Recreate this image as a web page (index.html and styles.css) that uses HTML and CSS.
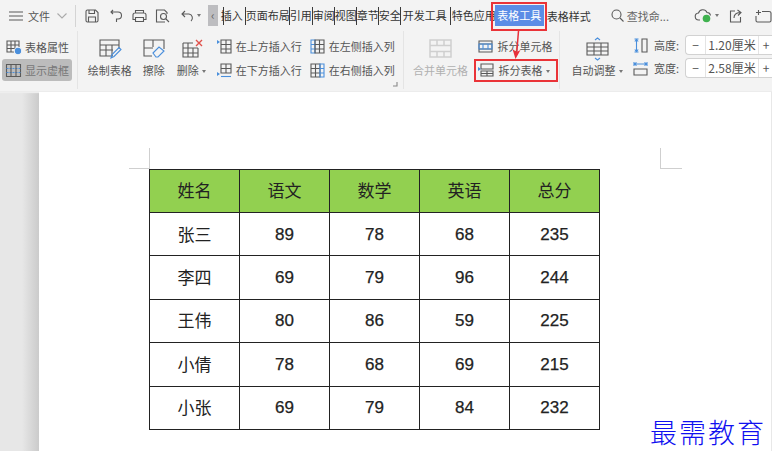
FILE: index.html
```html
<!DOCTYPE html>
<html lang="zh-CN">
<head>
<meta charset="utf-8">
<title>表格工具</title>
<link rel="stylesheet" href="styles.css">
</head>
<body>
<div class="app">
  <header class="topbar">
    <svg class="ic hamburger" width="14" height="12" viewBox="0 0 14 12"><path d="M0 2h14M0 6h14M0 10h14"/></svg>
    <span class="file">文件</span>
    <svg class="ic chev" width="10" height="6" viewBox="0 0 10 6"><path d="M.5.5 5 5 9.500.5"/></svg>
    <i class="tsep"></i>
    <svg class="ic qa qa-save" width="14" height="14" viewBox="0 0 14 14"><path d="M1 2.500Q1 1 2.500 1h8L13 3.500v8Q13 13 11.500 13h-9Q1 13 1 11.500zM4 1v3.500h5.500V1M3.500 13V8h7v5"/></svg>
    <svg class="ic qa qa-redo" width="14" height="14" viewBox="0 0 14 14"><path d="M1 3h7a3.500 3.500 0 0 1 0 7H6.500V13M3 1 1 3l2 2"/></svg>
    <svg class="ic qa qa-print" width="15" height="14" viewBox="0 0 15 14"><path d="M3.500 4V1.500h8V4M3.500 10.500H1V6q0-2 2-2h9q2 0 2 2v4.500h-2.500M3.500 8.500h8v4h-8z"/></svg>
    <svg class="ic qa qa-prev" width="15" height="14" viewBox="0 0 15 14"><path d="M10 13H1.500V1h8L12 3.500V5"/><circle cx="8.500" cy="7.500" r="3"/><path d="m11 10 3 3"/></svg>
    <svg class="ic qa qa-undo" width="13" height="12" viewBox="0 0 13 12"><path d="M4 1 1 4l3 3M1 4h7a4 4 0 0 1 2 7"/></svg>
    <i class="caret caret-undo"></i>
    <span class="scroll-btn">‹</span>
    <nav class="tabs">
      <span class="tab w22 first">插入</span>
      <span class="tab w44">页面布局</span>
      <span class="tab w23">引用</span>
      <span class="tab w22">审阅</span>
      <span class="tab w22">视图</span>
      <span class="tab w22">章节</span>
      <span class="tab w22">安全</span>
      <span class="tab w50 dev">开发工具</span>
      <span class="tab w45 spec">特色应用</span>
      <span class="tab-active">表格工具</span>
      <span class="tab-plain">表格样式</span>
    </nav>
    <svg class="ic search" width="13" height="13" viewBox="0 0 13 13"><circle cx="5.500" cy="5.500" r="4.500"/><path d="m9 9 3.500 3.500"/></svg>
    <span class="find">查找命...</span>
    <svg class="cloud" width="17" height="15" viewBox="0 0 17 15"><path class="stroke" d="M5 12H4a3.500 3.500 0 0 1-.5-7A4.500 4.500 0 0 1 12 4.500a3.500 3.500 0 0 1 3.500 3"/><circle cx="11.500" cy="10.500" r="3.800" fill="#3fb24f"/></svg>
    <i class="caret caret-cloud"></i>
    <svg class="ic share" width="14" height="14" viewBox="0 0 14 14"><path d="M6 2H1.500v11h10V8M5 9q0-5 6-5.500M8.500 1 12 3.500 9 6.500"/></svg>
    <svg class="ic addwin" width="17" height="14" viewBox="0 0 17 14"><path d="M7 2.500h7Q16 2.500 16 4v7.500q0 1.500-1.500 1.500h-12Q1 13 1 11.500V7M3.500 1v5M1 3.500h5"/></svg>
  </header>

  <section class="ribbon">
    <div class="group g-view">
      <div class="row-btn">
        <svg class="ic small" width="16" height="15" viewBox="0 0 16 15"><path d="M1 1h12v11H1zM1 5h12M1 8.500h12M5 1v11M9 1v11"/><circle class="fill-blue" cx="12" cy="11" r="3.700"/></svg>
        <span>表格属性</span>
      </div>
      <div class="row-btn selected">
        <svg class="ic small" width="15" height="13" viewBox="0 0 15 13"><path d="M.5.500h14v12H.5z"/><path class="blue" d="M.5 4.500h14M.5 8.500h14" stroke-dasharray="2 1"/><path d="M5 .5v12M10 .5v12"/></svg>
        <span>显示虚框</span>
      </div>
    </div>

    <div class="group g-draw">
      <div class="big b-draw">
        <svg class="ic" width="22" height="20" viewBox="0 0 22 20"><path d="M14 17H1V1h19v9M1 6h19M1 11h13M7 6v11M13 6v11"/><path class="blue" d="m12 19 1-3.500 7-7 2 2-7 7z"/></svg>
        <span>绘制表格</span>
      </div>
      <div class="big b-erase">
        <svg class="ic" width="22" height="20" viewBox="0 0 22 20"><path d="M9 17H1V1h20v9M1 9h9M10 1v7"/><path class="blue" d="m10 14 6-6 5 4-6 6h-2z"/></svg>
        <span>擦除</span>
      </div>
      <div class="big b-del">
        <svg class="ic" width="22" height="20" viewBox="0 0 22 20"><path d="M1 4h10M16 9v9H1V4M1 9h15M1 14h15M6 4v14M11 9v9"/><path class="red" d="m14 1 6 6m0-6-6 6"/></svg>
        <span class="with-caret">删除<i class="caret"></i></span>
      </div>
      <div class="insert-grid">
        <div class="ins">
          <svg class="ic" width="15" height="15" viewBox="0 0 15 15"><path d="M4 1h10v13H4zM4 5.500h10M4 10h10M9 1v13"/><path class="fill-blue-n" d="M0 1l3 2-3 2z"/></svg>
          <span>在上方插入行</span>
        </div>
        <div class="ins">
          <svg class="ic" width="15" height="15" viewBox="0 0 15 15"><path class="blue" d="M1 1h4v13H1zM1 5.500h4M1 10h4"/><path d="M5 1h9v13H5zM5 5.500h9M5 10h9M9.500 1v13"/></svg>
          <span>在左侧插入列</span>
        </div>
        <div class="ins">
          <svg class="ic" width="15" height="15" viewBox="0 0 15 15"><path d="M4 1h10v9H4zM4 5.500h10M9 1v9"/><path class="fill-blue-n" d="M0 9l3 2-3 2z"/><path class="blue" d="M4 13.500h10"/></svg>
          <span>在下方插入行</span>
        </div>
        <div class="ins">
          <svg class="ic" width="15" height="15" viewBox="0 0 15 15"><path d="M1 1h9v13H1zM1 5.500h9M1 10h9M5.500 1v13"/><path class="blue" d="M10 1h4v13h-4zM10 5.500h4M10 10h4"/></svg>
          <span>在右侧插入列</span>
        </div>
      </div>
      <svg class="launcher" width="5" height="5" viewBox="0 0 5 5"><path d="M4 0v4H0"/></svg>
    </div>

    <div class="group g-merge">
      <div class="big b-merge">
        <svg class="ic dim" width="23" height="19" viewBox="0 0 23 19"><path d="M1 1h21v17H1zM1 6.500h21M1 12.500h21M8 1v5.500M15 1v5.500M8 12.500V18M15 12.500V18"/></svg>
        <span>合并单元格</span>
      </div>
      <div class="split-col">
        <div class="ins split-a">
          <svg class="ic" width="15" height="13" viewBox="0 0 15 13"><path d="M1 1h13v11H1zM1 4h13M1 9h13"/><path class="blue" d="M1 4h13v5H1zM5 4v5M10 4v5"/></svg>
          <span>拆分单元格</span>
        </div>
        <div class="ins split-b">
          <svg class="ic" width="16" height="14" viewBox="0 0 16 14"><path d="M3 1h12v5H3zM3 8h12v5H3zM9 8v5M3 10.500h12"/><path class="fill-blue-n" d="M0 4l3 2-3 2z"/></svg>
          <span class="with-caret">拆分表格<i class="caret"></i></span>
        </div>
      </div>
    </div>

    <div class="group g-size">
      <div class="big b-auto">
        <svg class="ic" width="23" height="24" viewBox="0 0 23 24"><path d="M1 6h21v12H1zM1 10h21M1 14h21M8 6v12M15 6v12"/><path class="blue" d="m9 3 2.500-2L14 3M9 21l2.500 2 2.500-2"/></svg>
        <span class="with-caret">自动调整<i class="caret"></i></span>
      </div>
      <div class="dims">
        <div class="dim-row">
          <svg class="ic" width="15" height="15" viewBox="0 0 15 15"><path class="blue" d="M1.500 1h4M1.500 14h4M3.500 1v13M1.800 3.500l1.700-2 1.700 2M1.800 11.500l1.700 2 1.700-2"/><path d="M9 1h5v13H9z"/></svg>
          <span class="dim-label">高度:</span>
          <div class="stepper"><span class="minus">−</span><span class="val">1.20厘米</span><span class="plus">+</span></div>
        </div>
        <div class="dim-row">
          <svg class="ic" width="15" height="15" viewBox="0 0 15 15"><path class="blue" d="M1 1v4M14 1v4M1 3h13M3.500 1.300l-2 1.700 2 1.700M11.500 1.300l2 1.700-2 1.700"/><path d="M1 8h13v6H1z"/></svg>
          <span class="dim-label">宽度:</span>
          <div class="stepper"><span class="minus">−</span><span class="val">2.58厘米</span><span class="plus">+</span></div>
        </div>
      </div>
    </div>
  </section>

  <main class="doc">
    <div class="gutter"></div>
    <div class="page">
      <i class="crop crop-tl"></i>
      <i class="crop crop-tr"></i>
      <table class="scores">
        <thead>
          <tr><th>姓名</th><th>语文</th><th>数学</th><th>英语</th><th>总分</th></tr>
        </thead>
        <tbody>
          <tr><td>张三</td><td class="num">89</td><td class="num">78</td><td class="num">68</td><td class="num">235</td></tr>
          <tr><td>李四</td><td class="num">69</td><td class="num">79</td><td class="num">96</td><td class="num">244</td></tr>
          <tr><td>王伟</td><td class="num">80</td><td class="num">86</td><td class="num">59</td><td class="num">225</td></tr>
          <tr><td>小倩</td><td class="num">78</td><td class="num">68</td><td class="num">69</td><td class="num">215</td></tr>
          <tr><td>小张</td><td class="num">69</td><td class="num">79</td><td class="num">84</td><td class="num">232</td></tr>
        </tbody>
      </table>
      <div class="watermark">最需教育</div>
    </div>
  </main>

  <i class="mark mark-tab"></i>
  <i class="mark mark-split"></i>
  <svg class="arrow" width="14" height="32" viewBox="0 0 14 32"><path d="M9.500 0 7.500 24" stroke="#e8303a" stroke-width="1.500" fill="none"/><path d="M3.500 18 6.500 28 11.500 19 7.500 21z" fill="#e8303a"/></svg>
</div>
</body>
</html>
```

FILE: styles.css
```css
* { box-sizing: border-box; }
html, body { margin: 0; padding: 0; background: #fff; }
body {
  width: 772px;
  height: 462px;
  overflow: hidden;
  font-family: "Noto Sans CJK SC", "Noto Sans", sans-serif;
  font-size: 11px;
  color: #555;
}
.app { position: relative; width: 772px; height: 451px; display: flex; flex-direction: column; overflow: hidden; }

svg { display: block; flex: none; overflow: visible; }
.ic, .launcher { fill: none; stroke: #5a5a5a; stroke-width: 1.100; }
.ic .blue { stroke: #4a8fdc; }
.ic .red { stroke: #e0504a; stroke-width: 1.400; }
.ic .fill-blue { fill: #4a8fdc; stroke: #f3f3f3; }
.ic .fill-blue-n { fill: #4a8fdc; stroke: none; }
.ic.dim { stroke: #cfcfcf; stroke-width: 1.500; }
.stroke { fill: none; stroke: #5a5a5a; stroke-width: 1.100; }

.caret { display: inline-block; width: 0; height: 0; border: 2.500px solid transparent; border-top: 3px solid #777; border-bottom: 0; }

/* top bar */
.topbar { display: flex; align-items: center; height: 31px; flex: none; background: #f3f3f3; }
.hamburger { margin-left: 9px; }
.file { margin-left: 5px; width: 24px; font-size: 11px; color: #555; white-space: nowrap; }
.chev { margin-left: 7px; stroke: #aaa; }
.tsep { width: 1px; height: 22px; margin-left: 8px; background: #d4d4d4; }
.qa-save { margin-left: 9px; }
.qa-redo { margin-left: 11px; }
.qa-print { margin-left: 8px; }
.qa-prev { margin-left: 8px; }
.qa-undo { margin-left: 11px; }
.caret-undo { margin-left: 3px; }
.scroll-btn { width: 12px; height: 21px; margin-left: 7px; background: #bdbdc0; color: #666; font-size: 12px; line-height: 19px; text-align: center; }
.tabs { display: flex; align-items: center; margin-left: 5px; height: 21px; color: #333; }
.tab { height: 18px; line-height: 17px; border-left: 1px solid #3a3a3a; white-space: nowrap; }
.tab.first { text-indent: -3px; }
.w22 { width: 22px; } .w23 { width: 23px; } .w44 { width: 44px; } .w45 { width: 45px; } .w50 { width: 50px; }
.dev { padding-left: 2px; }
.spec { padding-left: 1px; }
.tab-active { width: 49px; height: 21px; line-height: 21px; margin-left: 0; background: #5b8de6; color: #fff; text-align: center; }
.tab-plain { width: 45px; margin-left: 3px; line-height: 18px; color: #333; white-space: nowrap; }
.search { margin-left: 19px; }
.find { margin-left: 3px; width: 46px; color: #666; white-space: nowrap; }
.cloud { margin-left: 26px; }
.caret-cloud { margin-left: 3px; }
.share { margin-left: 10px; }
.addwin { margin-left: 12px; }

/* ribbon */
.ribbon { display: flex; height: 61px; flex: none; background: #f3f3f3; border-bottom: 1px solid #ececec; box-shadow: 0 1px 1px #eee; position: relative; }
.group { position: relative; height: 58px; border-right: 1px solid #e4e4e4; display: flex; }
.group span { white-space: nowrap; }
.g-view { width: 78px; flex-direction: column; padding: 5px 0 0 2px; }
.row-btn { display: flex; align-items: center; gap: 3px; height: 22px; width: 70px; padding-left: 4px; }
.row-btn.selected { background: #bcbcbc; border-radius: 3px; color: #777; margin-top: 1px; gap: 4px; }
.big { display: flex; flex-direction: column; align-items: center; }
.big > svg { margin-top: 8px; }
.big > span { position: absolute; top: 31px; line-height: 16px; }
.g-draw { width: 327px; }
.b-draw { width: 44px; margin-left: 10px; }
.b-erase { width: 24px; margin-left: 10px; }
.b-del { width: 30px; margin-left: 12px; }
.b-del > span { margin-left: -3px; }
.with-caret .caret { margin-left: 3px; vertical-align: 2px; }
.insert-grid { display: grid; grid-template-columns: 93px 90px; margin-left: 9px; padding-top: 6px; row-gap: 6px; height: 54px; align-content: start; }
.ins { display: flex; align-items: center; gap: 4px; height: 18px; }
.launcher { position: absolute; right: 5px; bottom: 2px; stroke: #888; }
.g-merge { width: 157px; }
.b-merge { width: 56px; margin-left: 9px; color: #b0b0b0; }
.split-col { margin-left: 9px; padding-top: 6px; display: flex; flex-direction: column; gap: 6px; }
.split-a { gap: 5px; }
.split-b { gap: 5px; }
.g-size { border-right: 0; flex: 1; }
.b-auto { width: 48px; margin-left: 13px; }
.b-auto > svg { margin-top: 6px; }
.dims { margin-left: 12px; padding-top: 4px; display: flex; flex-direction: column; gap: 3px; width: 139px; overflow: hidden; }
.dim-row { display: flex; align-items: center; height: 20px; }
.dim-label { flex: none; margin-left: 6px; width: 31px; }
.stepper { display: flex; align-items: center; width: 88px; height: 20px; flex: none; background: #fff; border: 1px solid #d2d2d2; border-radius: 4px 0 0 4px; border-right: 0; }
.minus { width: 20px; text-align: center; border-right: 1px solid #e4e4e4; line-height: 18px; font-size: 12px; }
.val { width: 53px; text-align: center; line-height: 18px; border-right: 1px solid #e4e4e4; font-size: 12px; }
.plus { width: 14px; text-align: center; line-height: 18px; font-size: 12px; }

/* document */
.doc { display: flex; flex: 1; min-height: 0; }
.gutter { width: 39px; flex: none; background: linear-gradient(to right, #e7e7e7 0, #e7e7e7 22px, #cbcbcb 39px); }
.page { position: relative; flex: 1; background: #fff; border-right: 1px solid #e8e8e8; padding: 77px 0 0 110px; }
.crop { position: absolute; top: 56px; width: 22px; height: 21px; }
.crop-tl { left: 90px; width: 21px; border-right: 1px solid #cfcfcf; border-bottom: 1px solid #cfcfcf; }
.crop-tr { left: 621px; border-left: 1px solid #cfcfcf; border-bottom: 1px solid #cfcfcf; }
.scores { border-collapse: collapse; table-layout: fixed; width: 451px; height: 261px; color: #222; }
.scores th, .scores td { width: 90px; height: 43px; padding: 0 0 2px; border: 1px solid #222; text-align: center; font-size: 17px; font-weight: 400; }
.scores th { background: #92d050; padding-bottom: 3px; }
.scores .num { padding: 1px 0 0; font-family: "Liberation Sans", sans-serif; font-size: 17px; -webkit-text-stroke: .25px #222; }
.watermark { position: absolute; left: 611px; top: 323px; font-size: 27px; font-weight: 300; line-height: 34px; letter-spacing: 2px; color: #1010f0; white-space: nowrap; }

/* annotations */
.mark { position: absolute; border: 2px solid #ea3338; }
.mark-tab { left: 491px; top: 2px; width: 56px; height: 29px; }
.mark-split { left: 474px; top: 59px; width: 84px; height: 23px; }
.arrow { position: absolute; left: 509px; top: 31px; }
```
